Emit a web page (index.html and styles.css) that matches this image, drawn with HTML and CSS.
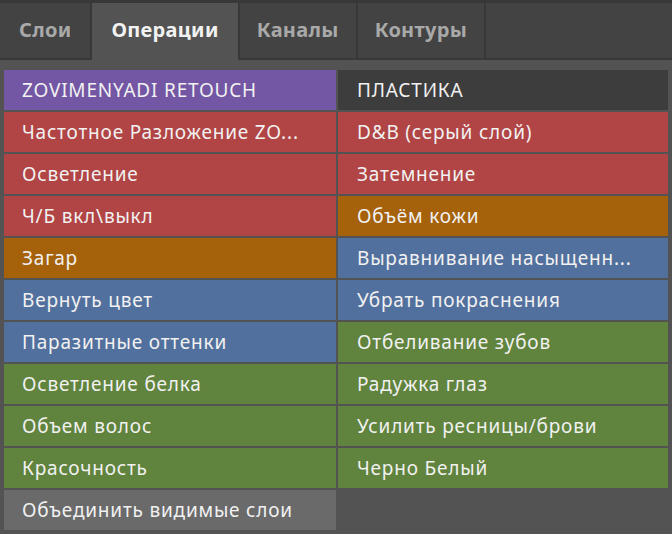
FILE: index.html
```html
<!DOCTYPE html>
<html lang="ru">
<head>
<meta charset="utf-8">
<link rel="stylesheet" href="styles.css">
</head>
<body>
<div class="panel">
  <div class="tabs">
    <div class="tab first">Слои</div>
    <div class="tab active">Операции</div>
    <div class="tab">Каналы</div>
    <div class="tab">Контуры</div>
    <div class="tab-fill"></div>
  </div>
  <div class="grid">
    <div class="btn purple">ZOVIMENYADI RETOUCH</div>
    <div class="btn dark">ПЛАСТИКА</div>
    <div class="btn red">Частотное Разложение ZO...</div>
    <div class="btn red">D&amp;B (серый слой)</div>
    <div class="btn red">Осветление</div>
    <div class="btn red">Затемнение</div>
    <div class="btn red">Ч/Б вкл\выкл</div>
    <div class="btn orange">Объём кожи</div>
    <div class="btn orange">Загар</div>
    <div class="btn blue">Выравнивание насыщенн...</div>
    <div class="btn blue">Вернуть цвет</div>
    <div class="btn blue">Убрать покраснения</div>
    <div class="btn blue">Паразитные оттенки</div>
    <div class="btn green">Отбеливание зубов</div>
    <div class="btn green">Осветление белка</div>
    <div class="btn green">Радужка глаз</div>
    <div class="btn green">Объем волос</div>
    <div class="btn green">Усилить ресницы/брови</div>
    <div class="btn green">Красочность</div>
    <div class="btn green">Черно Белый</div>
    <div class="btn gray">Объединить видимые слои</div>
  </div>
</div>
</body>
</html>
```
FILE: styles.css
```css
html, body {
  margin: 0;
  padding: 0;
  background: #535353;
}
.panel {
  width: 672px;
  height: 534px;
  background: #535353;
  font-family: "Noto Sans", "Liberation Sans", sans-serif;
  overflow: hidden;
}
.tabs {
  display: flex;
  height: 55px;
  padding-top: 3px;
  background: #383838;
  border-bottom: 2px solid #383838;
  gap: 2px;
}
.tab {
  display: flex;
  align-items: center;
  justify-content: center;
  padding: 0 17px 2px 17px;
  background: #434343;
  color: #a9a9a9;
  font-weight: 700;
  font-size: 20px;
  letter-spacing: 0.3px;
}
.tab.first {
  padding: 0 19px 2px 19px;
}
.tab.active {
  background: #535353;
  color: #f2f2f2;
  margin-bottom: -2px;
  padding: 0 19px 4px 19px;
}
.tab-fill {
  flex: 1;
  background: #434343;
}
.grid {
  display: grid;
  grid-template-columns: 332px 330px;
  grid-auto-rows: 40px;
  gap: 2px;
  padding: 10px 4px 0 4px;
}
.btn {
  display: flex;
  align-items: center;
  padding-left: 18px;
  padding-bottom: 1px;
  color: #f1f1f1;
  font-size: 19px;
  letter-spacing: 0.8px;
  white-space: nowrap;
  overflow: hidden;
}
.btn:nth-child(even) {
  padding-left: 19px;
}
.purple { background: #7356a4; }
.dark { background: #3d3d3d; }
.red { background: #b14444; }
.orange { background: #a5620b; }
.blue { background: #52709d; }
.green { background: #60833d; }
.gray { background: #6a6a6a; }
```
